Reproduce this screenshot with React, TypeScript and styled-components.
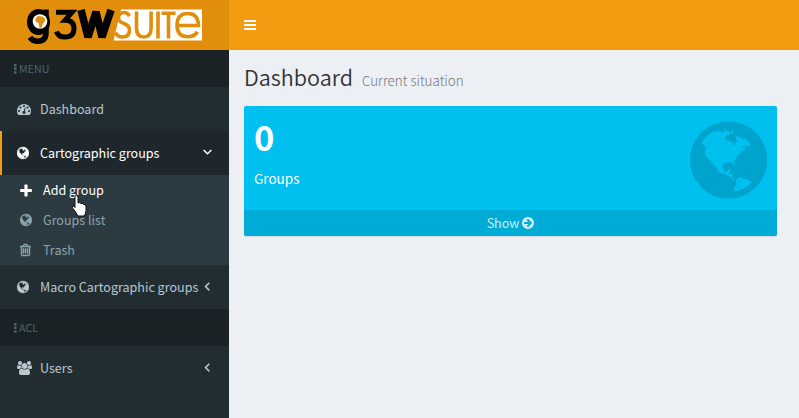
import React from "react";
import styled, { createGlobalStyle, css } from "styled-components";

const Global = createGlobalStyle`
  * { box-sizing: border-box; }
  html, body { margin: 0; padding: 0; overflow: hidden; }
  body {
    background: #ecf0f5;
    font-family: "Noto Sans CJK JP", "Noto Sans", sans-serif;
    font-size: 12.55px;
    line-height: 20px;
    color: #333;
  }
  h1, h3, p, ul { margin: 0; padding: 0; }
  ul { list-style: none; }
`;

const GLOBE =
  "M768 128q209 0 385.5 103t279.5 279.5 103 385.5-103 385.5-279.5 279.5-385.5 103-385.5-103-279.5-279.5-103-385.5 103-385.5 279.5-279.5 385.5-103zm274 521q-2 1-9.5 9.5t-13.5 9.5q2 0 4.5-5t5-11 3.5-7q6-7 22-15 14-6 52-12 34-8 51 11-2-2 9.5-13t14.5-12q3-2 15-4.5t15-7.5l2-22q-12 1-17.5-7t-6.5-21q0 2-6 8 0-7-4.5-8t-11.5 1-9 1q-10-3-15-7.5t-8-16.5-4-15q-2-5-9.5-11t-9.5-10q-1-2-2.5-5.5t-3-6.5-4-5.5-5.5-2.5-7 5-7.5 10-4.5 5q-3-2-6-1.5t-4.5 1-4.5 3-5 3.5q-3 2-8.5 3t-8.5 2q15-5-1-11-10-4-16-3 9-4 7.5-12t-8.5-14h5q-1-4-8.5-8.5t-17.5-8.5-13-6q-8-5-34-9.5t-33-.5q-5 6-4.5 10.5t4 14 3.5 12.5q1 6-5.5 13t-6.5 12q0 7 14 15.5t10 21.5q-3 8-16 16t-16 12q-5 8-1.5 18.5t10.5 16.5q2 2 1.5 4t-3.5 4.5-5.5 4-6.5 3.5l-3 2q-11 5-20.5-6t-13.5-26q-7-25-16-30-23-8-29 1-5-13-41-26-25-9-58-4 6-1 0-15-7-15-19-12 3-6 4-17.5t1-13.5q3-13 12-23 1-1 7-8.5t9.5-13.5.5-6q35 4 50-11 5-5 11.5-17t10.5-17q9-6 14-5.5t14.5 5.5 14.5 5q14 1 15.5-11t-7.5-20q12 1 3-17-4-7-8-9-12-4-27 5-8 4 2 8-1-1-9.5 10.5t-16.5 17.5-16-5q-1-1-5.5-13.5t-9.5-13.5q-8 0-16 15 3-8-11-15t-24-8q19-12-8-27-7-4-20.5-5t-19.5 4q-5 7-5.5 11.5t5 8 10.5 5.5 11.5 4 8.5 3q14 10 8 14-2 1-8.5 3.5t-11.5 4.5-6 4q-3 4 0 14t-2 14q-5-5-9-17.5t-7-16.5q7 9-25 6l-10-1q-4 0-16 2t-20.5 1-13.5-8q-4-8 0-20 1-4 4-2-4-3-11-9.5t-10-8.5q-46 15-94 41 6 1 12-1 5-2 13-6.5t10-5.5q34-14 42-7l5-5q14 16 20 25-7-4-30-1-20 6-22 12 7 12 5 18-4-3-11.5-10t-14.5-11-15-5q-16 0-22 1-146 80-235 222 7 7 12 8 4 1 5 9t2.5 11 11.5-3q9 8 3 19 1-1 44 27 19 17 21 21 3 11-10 18-1-2-9-9t-9-4q-3 5 .5 18.5t10.5 12.5q-7 0-9.5 16t-2.5 35.5-1 23.5l2 1q-3 12 5.5 34.5t21.5 19.5q-13 3 20 43 6 8 8 9 3 2 12 7.5t15 10 10 10.5q4 5 10 22.5t14 23.5q-2 6 9.5 20t10.5 23q-1 0-2.5 1t-2.5 1q3 7 15.5 14t15.5 13q1 3 2 10t3 11 8 2q2-20-24-62-15-25-17-29-3-5-5.5-15.5t-4.5-14.5q2 0 6 1.5t8.5 3.5 7.5 4 2 3q-3 7 2 17.5t12 18.5 17 19 12 13q6 6 14 19.5t0 13.5q9 0 20 10.5t17 19.5q5 8 8 26t5 24q2 7 8.5 13.5t12.5 9.5l16 8 13 7q5 2 18.5 10.5t21.5 11.5q10 4 16 4t14.5-2.5 13.5-3.5q15-2 29 15t21 21q36 19 55 11-2 1 .5 7.5t8 15.5 9 14.5 5.5 8.5q5 6 18 15t18 15q6-4 7-9-3 8 7 20t18 10q14-3 14-32-31 15-49-18 0-1-2.5-5.5t-4-8.5-2.5-8.5 0-7.5 5-3q9 0 10-3.5t-2-12.5-4-13q-1-8-11-20t-12-15q-5 9-16 8t-16-9q0 1-1.5 5.5t-1.5 6.5q-13 0-15-1 1-3 2.5-17.5t3.5-22.5q1-4 5.5-12t7.5-14.5 4-12.5-4.5-9.5-17.5-2.5q-19 1-26 20-1 3-3 10.5t-5 11.5-9 7q-7 3-24 2t-24-5q-13-8-22.5-29t-9.5-37q0-10 2.5-26.5t3-25-5.5-24.5q3-2 9-9.5t10-10.5q2-1 4.5-1.5t4.5 0 4-1.5 3-6q-1-1-4-3-3-3-4-3 7 3 28.5-1.5t27.5 1.5q15 11 22-2 0-1-2.5-9.5t-.5-13.5q5 27 29 9 3 3 15.5 5t17.5 5q3 2 7 5.5t5.5 4.5 5-.5 8.5-6.5q10 14 12 24 11 40 19 44 7 3 11 2t4.5-9.5 0-14-1.5-12.5l-1-8v-18l-1-8q-15-3-18.5-12t1.5-18.5 15-18.5q1-1 8-3.5t15.5-6.5 12.5-8q21-19 15-35 7 0 11-9-1 0-5-3t-7.5-5-4.5-2q9-5 2-16 5-3 7.5-11t7.5-10q9 12 21 2 8-8 1-16 5-7 20.5-10.5t18.5-9.5q7 2 8-2t1-12 3-12q4-5 15-9t13-5l17-11q3-4 0-4 18 2 31-11 10-11-6-20 3-6-3-9.5t-15-5.5q3-1 11.5-.5t10.5-1.5q15-10-7-16-17-5-43 12zm-163 877q206-36 351-189-3-3-12.5-4.5t-12.5-3.5q-18-7-24-8 1-7-2.5-13t-8-9-12.5-8-11-7q-2-2-7-6t-7-5.5-7.5-4.5-8.5-2-10 1l-3 1q-3 1-5.5 2.5t-5.5 3-4 3 0 2.5q-21-17-36-22-5-1-11-5.5t-10.5-7-10-1.5-11.5 7q-5 5-6 15t-2 13q-7-5 0-17.5t2-18.5q-3-6-10.5-4.5t-12 4.5-11.5 8.5-9 6.5-8.5 5.5-8.5 7.5q-3 4-6 12t-5 11q-2-4-11.5-6.5t-9.5-5.5q2 10 4 35t5 38q7 31-12 48-27 25-29 40-4 22 12 26 0 7-8 20.5t-7 21.5q0 6 2 16z";
const GAUGE =
  "M384 1152q0-53-37.5-90.5t-90.5-37.5-90.5 37.5-37.5 90.5 37.5 90.5 90.5 37.5 90.5-37.5 37.5-90.5zm192-448q0-53-37.5-90.5t-90.5-37.5-90.5 37.5-37.5 90.5 37.5 90.5 90.5 37.5 90.5-37.5 37.5-90.5zm428 481l101-382q6-26-7.5-48.5t-38.5-29.5-48 6.5-30 39.5l-101 382q-60 5-107 43.5t-63 98.5q-20 77 20 146t117 89 146-20 89-117q16-60-6-117t-72-91zm660-33q0-53-37.5-90.5t-90.5-37.5-90.5 37.5-37.5 90.5 37.5 90.5 90.5 37.5 90.5-37.5 37.5-90.5zm-640-640q0-53-37.5-90.5t-90.5-37.5-90.5 37.5-37.5 90.5 37.5 90.5 90.5 37.5 90.5-37.5 37.5-90.5zm448 192q0-53-37.5-90.5t-90.5-37.5-90.5 37.5-37.5 90.5 37.5 90.5 90.5 37.5 90.5-37.5 37.5-90.5zm320 448q0 261-141 483-19 29-54 29h-1402q-35 0-54-29-141-221-141-483 0-182 71-348t191-286 286-191 348-71 348 71 286 191 191 286 71 348z";
const TRASH =
  "M704 736v576q0 14-9 23t-23 9h-64q-14 0-23-9t-9-23v-576q0-14 9-23t23-9h64q14 0 23 9t9 23zm256 0v576q0 14-9 23t-23 9h-64q-14 0-23-9t-9-23v-576q0-14 9-23t23-9h64q14 0 23 9t9 23zm256 0v576q0 14-9 23t-23 9h-64q-14 0-23-9t-9-23v-576q0-14 9-23t23-9h64q14 0 23 9t9 23zm128 724v-948h-896v948q0 22 7 40.5t14.5 27 10.5 8.5h832q3 0 10.5-8.5t14.5-27 7-40.5zm-672-1076h448l-48-117q-7-9-17-11h-317q-10 2-17 11zm928 32v64q0 14-9 23t-23 9h-96v948q0 83-47 143.5t-113 60.5h-832q-66 0-113-58.5t-47-141.5v-952h-96q-14 0-23-9t-9-23v-64q0-14 9-23t23-9h309l70-167q15-37 54-63t79-26h320q40 0 79 26t54 63l70 167h309q14 0 23 9t9 23z";
const USERS =
  "M593 896q-162 5-265 128h-134q-82 0-138-40.5t-56-118.5q0-353 124-353 6 0 43.5 21t97.5 42.5 119 21.5q67 0 133-23-5 37-5 66 0 139 81 256zm1071 637q0 120-73 189.5t-194 69.5h-874q-121 0-194-69.5t-73-189.5q0-53 3.5-103.5t14-109 26.5-108.5 43-97.5 62-81 85.5-53.5 111.5-20q10 0 43 21.5t73 48 107 48 135 21.5 135-21.5 107-48 73-48 43-21.5q61 0 111.5 20t85.5 53.5 62 81 43 97.5 26.5 108.5 14 109 3.5 103.5zm-1024-1277q0 106-75 181t-181 75-181-75-75-181 75-181 181-75 181 75 75 181zm704 384q0 159-112.5 271.5t-271.5 112.5-271.5-112.5-112.5-271.5 112.5-271.5 271.5-112.5 271.5 112.5 112.5 271.5zm576 225q0 78-56 118.5t-138 40.5h-134q-103-123-265-128 81-117 81-256 0-29-5-66 66 23 133 23 59 0 119-21.5t97.5-42.5 43.5-21q124 0 124 353zm-128-609q0 106-75 181t-181 75-181-75-75-181 75-181 181-75 181 75 75 181z";
const ARROW =
  "M1413 896q0-27-18-45l-91-91-362-362q-18-18-45-18t-45 18l-91 91q-18 18-18 45t18 45l189 189h-502q-26 0-45 19t-19 45v128q0 26 19 45t45 19h502l-189 189q-19 19-19 45t19 45l91 91q18 18 45 18t45-18l362-362 91-91q18-18 18-45zm251 0q0 209-103 385.5t-279.5 279.5-385.5 103-385.5-103-279.5-279.5-103-385.5 103-385.5 279.5-279.5 385.5-103 385.5 103 279.5 279.5 103 385.5z";
const PLUS =
  "M1408 800v192q0 40-28 68t-68 28h-416v416q0 40-28 68t-68 28h-192q-40 0-68-28t-28-68v-416h-416q-40 0-68-28t-28-68v-192q0-40 28-68t68-28h416v-416q0-40 28-68t68-28h192q40 0 68 28t28 68v416h416q40 0 68 28t28 68z";

const Svg = styled.svg`
  display: block;
  flex: none;
  fill: currentColor;
`;

type GlyphProps = { d: string; width: number; height?: number; box?: string; bold?: number };
const Glyph = ({ d, width, height = 14, box = "0 0 1792 1792", bold = 0 }: GlyphProps) => (
  <Svg width={width} height={height} viewBox={box} aria-hidden="true">
    <path d={d} stroke="currentColor" strokeWidth={bold} />
  </Svg>
);
const Globe = ({ size = 14, bold }: { size?: number; bold?: number }) => (
  <Glyph d={GLOBE} width={(size * 12) / 14} height={size} box="0 0 1536 1792" bold={bold} />
);

const Page = styled.div`
  display: grid;
  grid-template-columns: 229px 1fr;
  grid-template-rows: 50px 1fr;
  height: 418px;
`;

const Brand = styled.a`
  display: block;
  background: #e08e0b;
`;

const Topbar = styled.header`
  display: flex;
  align-items: center;
  padding-left: 15px;
  background: #f39c12;
  color: #fff;
`;

const Sidebar = styled.aside`
  background: #222d32;
  color: #b8c7ce;
`;

const SectionTitle = styled.li`
  display: flex;
  align-items: center;
  gap: 2px;
  height: 37px;
  padding: 1px 0 0 14px;
  background: #1a2226;
  color: #4b646f;
  font-size: 10.7px;
`;

const NavRow = styled.a<{ $active?: boolean }>`
  display: flex;
  align-items: center;
  height: 44px;
  padding: 0 17px 0 ${(p) => (p.$active ? 15 : 17)}px;
  white-space: nowrap;
  ${(p) =>
    p.$active &&
    css`
      color: #fff;
      background: #1e282c;
      border-left: 2px solid #f39c12;
    `}
`;

const IconSlot = styled.span`
  display: flex;
  flex: none;
  width: 23px;
`;

const NavText = styled.span`
  flex: 1;
`;

const Submenu = styled.ul`
  background: #2c3b41;
`;

const SubRow = styled.a<{ $hover?: boolean }>`
  display: flex;
  align-items: center;
  height: 30px;
  padding-left: 20px;
  color: ${(p) => (p.$hover ? "#fff" : "#8aa4af")};
`;

const Content = styled.main`
  padding: 13px 22px 0 15px;
`;

const Heading = styled.h1`
  display: flex;
  align-items: baseline;
  gap: 9px;
  height: 43px;
  font-size: 21.6px;
  line-height: 28px;
  font-weight: 350;
`;

const Subheading = styled.small`
  font-size: 13.4px;
  font-weight: 300;
  color: #777;
`;

const InfoBox = styled.section`
  position: relative;
  height: 130px;
  border-radius: 2px;
  overflow: hidden;
  background: #00c0ef;
  color: #fff;
  box-shadow: 0 1px 1px rgba(0, 0, 0, 0.1);
`;

const BoxBody = styled.div`
  height: 104px;
  padding: 9px 10px;
`;

const Count = styled.h3`
  height: 52px;
  font-size: 34.5px;
  line-height: 42px;
  font-weight: 700;
`;

const BoxLabel = styled.p`
  font-size: 13.5px;
  line-height: 22px;
`;

const BoxIcon = styled.div`
  position: absolute;
  right: 10px;
  top: 9px;
  color: rgba(0, 0, 0, 0.15);
`;

const BoxFooter = styled.a`
  display: flex;
  align-items: center;
  justify-content: center;
  gap: 2px;
  height: 26px;
  padding-left: 1px;
  background: rgba(0, 0, 0, 0.1);
  color: rgba(255, 255, 255, 0.8);
`;

const Pointer = styled.svg`
  position: absolute;
  left: 71px;
  top: 195px;
`;

const Dots = () => (
  <Svg width="3" height="10" viewBox="0 0 3 10">
    <path d="M0 0h2.5v2.5H0zM0 3.6h2.5v2.5H0zM0 7.2h2.5v2.5H0z" />
  </Svg>
);

const Chevron = ({ down }: { down?: boolean }) => (
  <svg width="9" height="11" viewBox="0 0 9 11" fill="none" stroke="currentColor" strokeWidth="1.5">
    <path d={down ? "M.6 2 4.5 5.800 8.4 2" : "M6.300 .8 2.5 4.600 6.300 8.400"} />
  </svg>
);

const Logo = () => (
  <svg width="229" height="50" viewBox="0 0 229 50" fill="none">
    <path d="M121 9.500h81v31h-88.500z" fill="#fff" />
    <ellipse cx="38.500" cy="22" rx="11.500" ry="13" fill="#000" />
    <path d="M46 9.500v23q0 8.700-8 8.700-5.500 0-8-4" stroke="#000" strokeWidth="5.500" />
    <circle cx="40" cy="21.500" r="7.300" fill="#fff" />
    <path d="M35.500 18.500l2.500-2.500 4 .5 3.500 2.500-1 3-1.500 1.500-1.500 4-2 .5-1-5-3-1.500z" fill="#e08e0b" />
    <path d="M56 12.300h16l-7 8q9 0 9 8.200 0 8.500-9 8.500-7 0-8.500-5.500" stroke="#000" strokeWidth="5" />
    <path
      d="M81 10l7 27 8-25 6 25 9-27"
      stroke="#000"
      strokeWidth="7.500"
      strokeLinejoin="bevel"
    />
    <g stroke="#e08e0b" strokeWidth="3.600">
      <path d="M129.500 16q-2-3.500-5.500-3.500-5.500 0-5.500 5.500 0 4 5.500 5.500 5.500 2 5.500 6.500 0 7-7 7-5 0-7-4.500" />
      <path d="M136.500 11.500v16.500q0 9 7.300 9t7.300-9V11.500" />
      <path d="M158 11.500v27M161.500 13.300h14M168.500 13.300v25.200" />
      <path d="M178 25.500h20.500q-.3-12-10.500-12-11 0-11 11.700 0 11.500 11 11.500 6.500 0 9.500-5" />
    </g>
  </svg>
);

export default function App() {
  return (
    <>
      <Global />
      <Page>
        <Brand>
          <Logo />
        </Brand>
        <Topbar>
          <Svg width="12" height="10" viewBox="0 0 12 10">
            <path d="M0 0h12v2H0zM0 4h12v2H0zM0 8h12v2H0z" />
          </Svg>
        </Topbar>
        <Sidebar>
          <ul>
            <SectionTitle>
              <Dots />
              MENU
            </SectionTitle>
            <li>
              <NavRow>
                <IconSlot><Glyph d={GAUGE} width={14} /></IconSlot>
                <NavText>Dashboard</NavText>
              </NavRow>
            </li>
            <li>
              <NavRow $active>
                <IconSlot><Globe bold={40} /></IconSlot>
                <NavText>Cartographic groups</NavText>
                <Chevron down />
              </NavRow>
              <Submenu>
                <li>
                  <SubRow $hover>
                    <IconSlot><Glyph d={PLUS} width={12} height={15} box="0 0 1408 1792" /></IconSlot>
                    Add group
                  </SubRow>
                </li>
                <li>
                  <SubRow>
                    <IconSlot><Globe bold={40} /></IconSlot>
                    Groups list
                  </SubRow>
                </li>
                <li>
                  <SubRow>
                    <IconSlot><Glyph d={TRASH} width={11} box="192 0 1408 1792" bold={60} /></IconSlot>
                    Trash
                  </SubRow>
                </li>
              </Submenu>
            </li>
            <li>
              <NavRow>
                <IconSlot><Globe bold={40} /></IconSlot>
                <NavText>Macro Cartographic groups</NavText>
                <Chevron />
              </NavRow>
            </li>
            <SectionTitle>
              <Dots />
              ACL
            </SectionTitle>
            <li>
              <NavRow>
                <IconSlot><Glyph d={USERS} width={15} box="0 0 1920 1792" /></IconSlot>
                <NavText>Users</NavText>
                <Chevron />
              </NavRow>
            </li>
          </ul>
        </Sidebar>
        <Content>
          <Heading>
            Dashboard <Subheading>Current situation</Subheading>
          </Heading>
          <InfoBox>
            <BoxBody>
              <Count>0</Count>
              <BoxLabel>Groups</BoxLabel>
            </BoxBody>
            <BoxIcon><Globe size={90} /></BoxIcon>
            <BoxFooter>
              Show <Glyph d={ARROW} width={14} />
            </BoxFooter>
          </InfoBox>
        </Content>
      </Page>
      <Pointer width="17" height="23" viewBox="0 0 17 23">
        <path
          d="M4 2q0-1.500 1.500-1.500T7 2v6q2-1 3 .5 2-.5 2.500 1 2.500-.5 2.500 2v4q0 3-2 5.500H7Q5 17 1.500 13q-1-2 .5-2t2 1.500z"
          fill="#fff"
          stroke="#111"
        />
      </Pointer>
    </>
  );
}
